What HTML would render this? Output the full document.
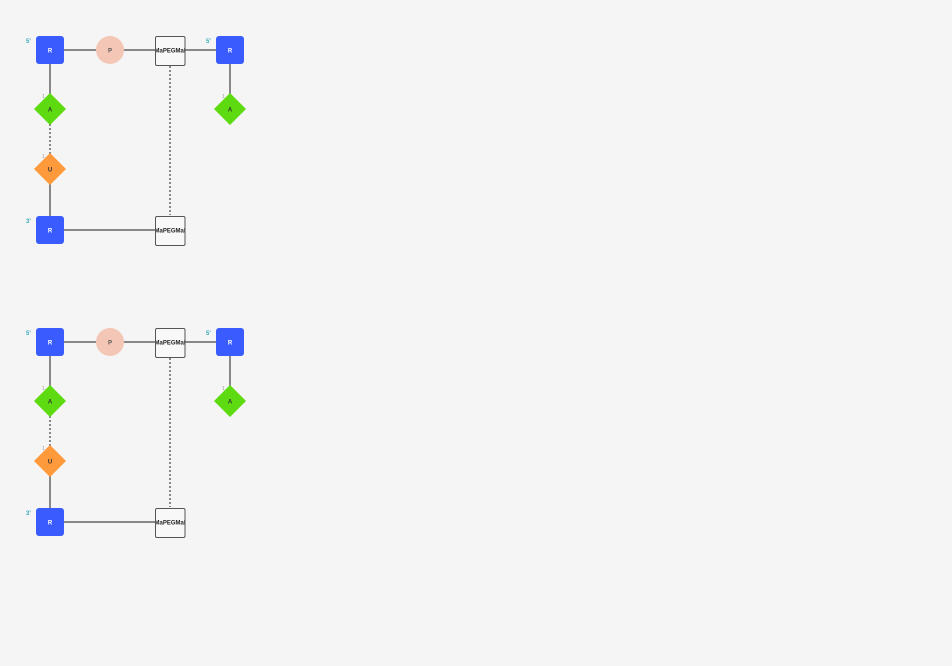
<!DOCTYPE html>
<html><head><meta charset="utf-8"><style>
html,body{margin:0;padding:0;background:#f5f5f5;width:952px;height:666px;overflow:hidden}
svg{display:block}
text{font-family:"Liberation Sans",sans-serif}
</style></head><body>
<svg width="952" height="666" viewBox="0 0 952 666">
<defs>
<clipPath id="c1"><rect x="156" y="36" width="29" height="30"/></clipPath>
<clipPath id="c2"><rect x="156" y="216" width="29" height="30"/></clipPath>
<g id="g">
  <g stroke="#888" stroke-width="2" fill="none">
    <line x1="64" y1="50" x2="155" y2="50"/>
    <line x1="185" y1="50" x2="216" y2="50"/>
    <line x1="50" y1="64" x2="50" y2="96"/>
    <line x1="230" y1="64" x2="230" y2="96"/>
    <line x1="50" y1="182" x2="50" y2="216"/>
    <line x1="64" y1="230" x2="155" y2="230"/>
    <line x1="170" y1="66" x2="170" y2="215" stroke-dasharray="2,2"/>
    <line x1="50" y1="124" x2="50" y2="155" stroke-dasharray="2,2"/>
  </g>
  <rect x="36" y="36" width="28" height="28" rx="3" fill="#3a5cff"/>
  <text x="50" y="52.5" font-size="6" fill="#fff" text-anchor="middle" font-weight="bold">R</text>
  <circle cx="110" cy="50" r="14" fill="#f4c6b6"/>
  <text x="110" y="52.5" font-size="6" fill="#555" text-anchor="middle" font-weight="bold">P</text>
  <rect x="155.5" y="36.5" width="29.5" height="29" rx="1.5" fill="#f8f8f8" stroke="#555"/>
  <text x="170" y="52.5" font-size="6" fill="#222" text-anchor="middle" font-weight="bold" clip-path="url(#c1)">MaPEGMal</text>
  <rect x="216" y="36" width="28" height="28" rx="3" fill="#3a5cff"/>
  <text x="230" y="52.5" font-size="6" fill="#fff" text-anchor="middle" font-weight="bold">R</text>
  <polygon points="50,93 66,109 50,125 34,109" fill="#5ddb10"/>
  <text x="50" y="111.5" font-size="6" fill="#333" text-anchor="middle" font-weight="bold">A</text>
  <polygon points="230,93 246,109 230,125 214,109" fill="#5ddb10"/>
  <text x="230" y="111.5" font-size="6" fill="#333" text-anchor="middle" font-weight="bold">A</text>
  <polygon points="50,153 66,169 50,185 34,169" fill="#ff9a3c"/>
  <text x="50" y="171.5" font-size="6" fill="#333" text-anchor="middle" font-weight="bold">U</text>
  <rect x="36" y="216" width="28" height="28" rx="3" fill="#3a5cff"/>
  <text x="50" y="232.5" font-size="6" fill="#fff" text-anchor="middle" font-weight="bold">R</text>
  <rect x="155.5" y="216.5" width="29.5" height="29" rx="1.5" fill="#f8f8f8" stroke="#555"/>
  <text x="170" y="232.5" font-size="6" fill="#222" text-anchor="middle" font-weight="bold" clip-path="url(#c2)">MaPEGMal</text>
  <text x="26" y="43" font-size="6" fill="#3aa8b8" font-weight="bold">5'</text>
  <text x="206" y="43" font-size="6" fill="#3aa8b8" font-weight="bold">5'</text>
  <text x="26" y="223" font-size="6" fill="#3aa8b8" font-weight="bold">3'</text>
  <text x="42" y="98" font-size="5" fill="#999">1</text>
  <text x="222" y="98" font-size="5" fill="#999">1</text>
  <text x="42" y="158" font-size="5" fill="#999">1</text>
</g>
</defs>
<use href="#g"/>
<use href="#g" y="292"/>
</svg>
</body></html>
